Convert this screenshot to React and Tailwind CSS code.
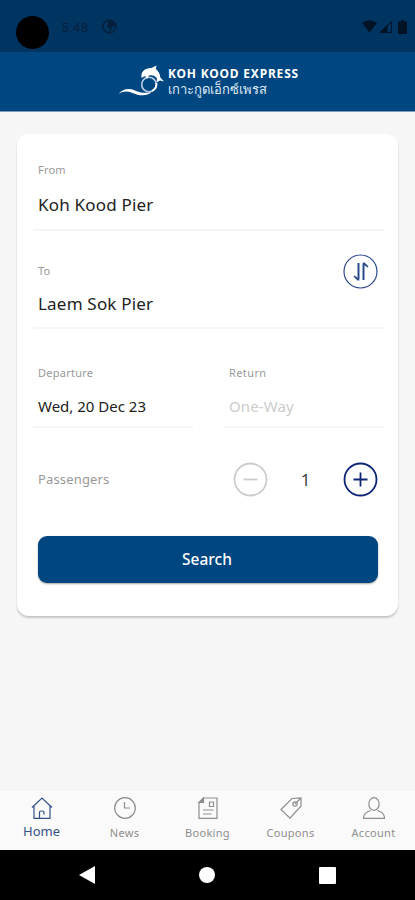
import React, { useState } from 'react';

const StatusBar = () => (
  <div className="h-[52px] bg-[#003562] flex items-start pt-4 pl-4 pr-2 text-[#04203c]">
    <div className="w-[33px] h-[33px] rounded-full bg-black" />
    <span className="ml-3 mt-[1px] w-[29px] text-[13.5px] leading-5 tracking-[0.4px] font-['Roboto',sans-serif] whitespace-nowrap">
      5:48
    </span>
    <svg className="ml-3 mt-[3px] w-[15px] h-[15px]" viewBox="0 0 15 15" fill="none">
      <circle cx="7.5" cy="7.5" r="6.4" stroke="currentColor" strokeWidth="1.6" />
      <path d="M6.500 1.500C10 0.500 14 3 14 7.500L11.500 7L9.500 8.500V11.500L7 13.500L7.500 9.500L5.500 8V5Z" fill="currentColor" />
    </svg>
    <div className="ml-auto flex mt-1 text-[#001226]">
      <svg className="w-[15px] h-[13px]" viewBox="0 0 15 13" fill="currentColor">
        <path d="M0 3Q7.500 -2.500 15 3L7.500 12.500Z" />
      </svg>
      <svg className="ml-[2px] w-[13px] h-[13px]" viewBox="0 0 13 13" fill="none">
        <path d="M1.500 12.400L12.400 1.500V12.400Z" stroke="currentColor" strokeWidth="1" />
        <path d="M0 13L8.500 4.500V13Z" fill="currentColor" />
      </svg>
      <svg className="ml-[6px] w-[9px] h-[14px]" viewBox="0 0 9 14" fill="currentColor">
        <path d="M3 0H6V1.500H9V14H0V1.500H3Z" />
      </svg>
    </div>
  </div>
);

const Header = () => (
  <header className="h-[60px] bg-[#004680] border-b border-[#7d9bb8] flex pt-[13px] pl-[118px] text-white">
    <svg className="w-[47px] h-[32px] shrink-0" viewBox="0 0 47 32" fill="none">
      <path
        d="M0.500 29C5 23.500 11 23 17 25.500C23 28 29 29 34 26C31 31 23 31.500 16 28.500C10 26 6 25.500 0.500 29Z"
        fill="currentColor"
      />
      <circle cx="31" cy="19.500" r="7.300" stroke="#b9cce6" strokeWidth="1.6" />
      <path d="M34 26C37 24.500 38.800 22 38.500 18" stroke="currentColor" strokeWidth="1.8" />
      <path
        d="M23.500 13C22.500 6.500 27 2.800 33.500 3L38.500 0.500L37.800 4C41 6.500 42 9.500 42.300 12.500L46 16.500L42 15.500L38.500 17.500L39 13.500C37 10.500 34 9.800 31 10.500L29 14L27.500 11.200C25.500 11.500 24.500 12 23.500 13Z"
        fill="currentColor"
      />
    </svg>
    <div className="ml-[3px] whitespace-nowrap">
      <div className="text-[12px] leading-[17px] font-bold tracking-[0.8px]">KOH KOOD EXPRESS</div>
      <div className="text-[13px] leading-[15px] text-[#dfe9f6] font-['Liberation_Sans',sans-serif]">
        เกาะกูดเอ็กซ์เพรส
      </div>
    </div>
  </header>
);

const BookingForm = () => {
  const [passengers, setPassengers] = useState(1);

  return (
    <section className="mx-[17px] mt-[22px] h-[482px] rounded-xl bg-white pl-4 pr-[14px] pt-[28px] shadow-[0_2px_2px_rgba(0,0,0,0.2)]">
      <div className="h-[69px] border-b-2 border-[#f5f5f5] px-[5px]">
        <div className="text-[11px] leading-4 tracking-[0.2px] text-[#999]">From</div>
        <div className="mt-[15px] text-[17px] leading-6 tracking-[0.2px] text-[#222]">Koh Kood Pier</div>
      </div>

      <div className="flex justify-between h-[98px] border-b-2 border-[#f5f5f5] pl-[5px] pr-[6px] pt-[23px]">
        <div>
          <div className="mt-[9px] text-[11px] leading-4 tracking-[0.2px] text-[#999]">To</div>
          <div className="mt-[13px] text-[17px] leading-6 tracking-[0.2px] text-[#222]">Laem Sok Pier</div>
        </div>
        <button type="button" aria-label="Swap piers" className="w-[35px] h-[35px] text-[#2b4a8b]">
          <svg viewBox="0 0 35 35" fill="none" stroke="currentColor">
            <circle cx="17.500" cy="17.500" r="16.500" strokeWidth="1.2" />
            <path d="M15.500 9V25.500" strokeWidth="2" />
            <path d="M20.500 26V9.500" strokeWidth="2" />
            <path d="M16.500 26.500H14.500L10.500 22.500L11.500 21.500L15 24Z" fill="currentColor" stroke="none" />
            <path d="M19.500 8.500H21.500L25.500 12.500L24.500 13.500L21 11Z" fill="currentColor" stroke="none" />
          </svg>
        </button>
      </div>

      <div className="flex justify-between h-[99px]">
        <div className="w-[160px] border-b-2 border-[#f5f5f5] px-[5px] pt-[36px]">
          <div className="text-[11px] leading-4 tracking-[0.25px] text-[#999]">Departure</div>
          <div className="mt-[15px] text-[15px] leading-5 text-[#222]">Wed, 20 Dec 23</div>
        </div>
        <div className="w-[160px] border-b-2 border-[#f5f5f5] px-[5px] pt-[36px]">
          <div className="text-[11px] leading-4 tracking-[0.4px] text-[#999]">Return</div>
          <div className="mt-[15px] text-[15px] leading-5 tracking-[0.1px] text-[#ccc]">One-Way</div>
        </div>
      </div>

      <div className="flex items-center pl-[5px] pr-[6px] mt-[34px]">
        <span className="pt-[1px] text-[13px] tracking-[0.15px] text-[#999]">Passengers</span>
        <div className="ml-auto flex items-center w-[145px] justify-between">
          <button
            type="button"
            aria-label="Remove passenger"
            onClick={() => setPassengers((n) => Math.max(1, n - 1))}
            className="w-[35px] h-[35px] text-[#ccc]"
          >
            <svg viewBox="0 0 35 35" fill="none" stroke="currentColor" strokeWidth="1.8">
              <circle cx="17.500" cy="17.500" r="16" />
              <path d="M10.500 17.500H24.500" />
            </svg>
          </button>
          <span className="text-[17px] leading-6 text-[#444]">{passengers}</span>
          <button
            type="button"
            aria-label="Add passenger"
            onClick={() => setPassengers((n) => n + 1)}
            className="w-[35px] h-[35px] text-[#0c2576]"
          >
            <svg viewBox="0 0 35 35" fill="none" stroke="currentColor" strokeWidth="1.8">
              <circle cx="17.500" cy="17.500" r="16" />
              <path d="M10.500 17.500H24.500M17.500 10.500V24.500" />
            </svg>
          </button>
        </div>
      </div>

      <button
        type="button"
        className="block ml-[5px] mt-[39px] w-[340px] h-[47px] rounded-[9px] bg-[#004680] pr-[2px] pt-[1px] text-white text-[15.5px] font-medium shadow-[0_1px_2px_rgba(0,0,0,0.35)]"
      >
        Search
      </button>
    </section>
  );
};

const icons = {
  Home: <path d="M1 10.500L11 1L21 10.500M3 9V21.300H19V9M8.500 21V15.500Q8.500 14 10 14H11.500Q13 14 13 15.500V17.500" />,
  News: (
    <>
      <circle cx="11" cy="11" r="10.300" />
      <path d="M10.500 5V11H16" />
    </>
  ),
  Booking: (
    <>
      <path d="M6.500 1H20V21.300H2V5.500Z" />
      <path d="M6.500 1V5.500H2Z" fill="currentColor" />
      <path d="M12.500 5H16.500V9.500H12.500ZM6 13H16.500M6 17H14.500" />
    </>
  ),
  Coupons: (
    <>
      <path d="M1 12.500L12 1.500L21 1V9L10 21.200Z" />
      <circle cx="15" cy="7" r="2.200" />
      <path d="M15 7L20.500 1.500" />
    </>
  ),
  Account: (
    <>
      <ellipse cx="11" cy="7" rx="5.200" ry="6.300" />
      <path d="M7.500 13.500C4 14.500 0.500 16 0.500 21.300H21.500C21.500 16 18 14.500 14.500 13.500" />
    </>
  ),
};

const TabBar = () => {
  const [active, setActive] = useState('Home');

  return (
    <nav className="grid grid-cols-5 h-[61px] border-t border-[#f0f0f0] bg-[#fafafa]">
      {Object.keys(icons).map((name) => (
        <button
          key={name}
          type="button"
          onClick={() => setActive(name)}
          className={`flex flex-col items-center pt-[7px] ${active === name ? 'text-[#345287]' : 'text-[#8e8e8e]'}`}
        >
          <svg className="w-[22px] h-[22px]" viewBox="0 0 22 22" fill="none" stroke="currentColor" strokeWidth="1.2">
            {icons[name]}
          </svg>
          <span
            className={
              active === name ? 'mt-1 text-[13px] leading-4' : 'mt-[6px] text-[11px] leading-4 tracking-[0.3px]'
            }
          >
            {name}
          </span>
        </button>
      ))}
    </nav>
  );
};

const SystemNav = () => (
  <div className="h-[50px] bg-black flex items-center justify-between px-[79px] text-white">
    <svg className="w-4 h-[18px]" viewBox="0 0 16 18" fill="currentColor">
      <path d="M16 0V18L0 9Z" />
    </svg>
    <div className="w-4 h-4 rounded-full bg-white" />
    <div className="w-[17px] h-[17px] rounded-[1px] bg-white" />
  </div>
);

export default function App() {
  return (
    <div className="w-[415px] h-[900px] flex flex-col bg-[#f6f6f6] overflow-hidden font-['Noto_Sans',sans-serif]">
      <StatusBar />
      <Header />
      <main className="flex-1">
        <BookingForm />
      </main>
      <TabBar />
      <SystemNav />
    </div>
  );
}
